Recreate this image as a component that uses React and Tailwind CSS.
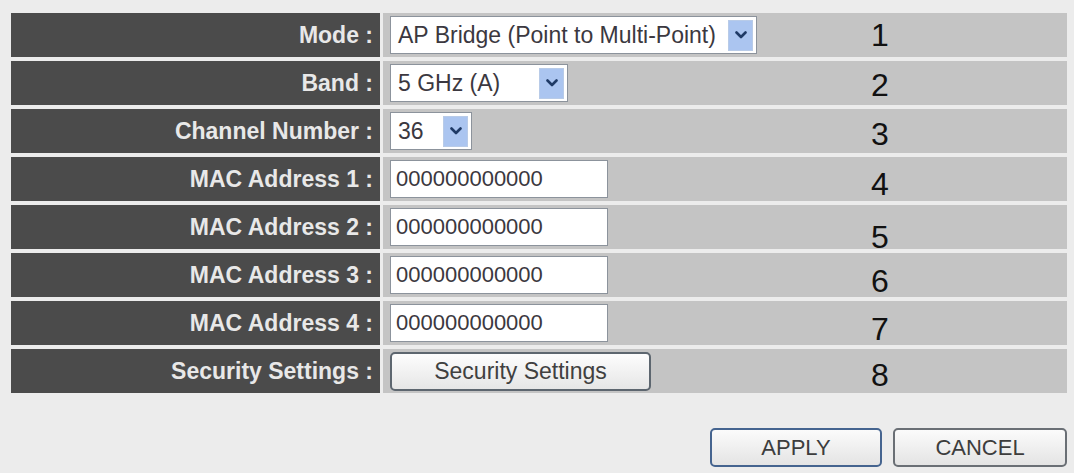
import React from "react";

const font = { fontFamily: '"Liberation Sans", Arial, sans-serif' };

// Small navy chevron used inside the dropdown arrow button
function Chevron() {
  return (
    <svg width="12" height="8" viewBox="0 0 12 8" fill="none">
      <path d="M1.5 1.5 L6 6 L10.5 1.5" stroke="#1f3a66" strokeWidth="2.6" strokeLinecap="round" strokeLinejoin="round" />
    </svg>
  );
}

function Select({ value, width }) {
  return (
    <div
      className={`flex h-[38px] items-center justify-between border border-[#8c939c] bg-white pl-[7px] pr-[3px] ${width}`}
    >
      <span className="text-[23px] leading-none text-[#3b3840]">{value}</span>
      <span className="flex h-[31px] w-[25px] items-center justify-center border border-[#b8cbe8] bg-[#abc5f0]">
        <Chevron />
      </span>
    </div>
  );
}

function TextBox({ value }) {
  return (
    <div className="flex h-[38px] w-[218px] items-center border border-[#8c939c] bg-white pl-[5px]">
      <span className="text-[22px] leading-none text-[#3b3840]">{value}</span>
    </div>
  );
}

function PushButton({ children, width, focused }) {
  return (
    <button
      className={`flex h-[39px] items-center justify-center rounded-[5px] bg-gradient-to-b from-[#fbfbfb] to-[#e4e4e4] text-[22px] leading-none text-[#3d3d3d] ${width} ${
        focused ? "border-2 border-[#45648f]" : "border-2 border-[#6a6f75]"
      }`}
      style={font}
    >
      {children}
    </button>
  );
}

const rows = [
  { label: "Mode :", control: <Select value="AP Bridge (Point to Multi-Point)" width="w-[367px]" />, num: "1", shift: "pt-0" },
  { label: "Band :", control: <Select value="5 GHz (A)" width="w-[178px]" />, num: "2", shift: "pt-[4px]" },
  { label: "Channel Number :", control: <Select value="36" width="w-[82px]" />, num: "3", shift: "pt-[5px]" },
  { label: "MAC Address 1 :", control: <TextBox value="000000000000" />, num: "4", shift: "pt-[10px]" },
  { label: "MAC Address 2 :", control: <TextBox value="000000000000" />, num: "5", shift: "pt-[20px]" },
  { label: "MAC Address 3 :", control: <TextBox value="000000000000" />, num: "6", shift: "pt-[12px]" },
  { label: "MAC Address 4 :", control: <TextBox value="000000000000" />, num: "7", shift: "pt-[11px]" },
  {
    label: "Security Settings :",
    control: (
      <button
        className="flex h-[39px] w-[261px] items-center justify-center rounded-[5px] border-2 border-[#5d666f] bg-gradient-to-b from-[#fdfdfd] to-[#e6e6e6] text-[23px] leading-none text-[#404040]"
        style={font}
      >
        Security Settings
      </button>
    ),
    num: "8",
    shift: "pt-[8px]",
  },
];

export default function App() {
  return (
    <div className="h-[473px] w-[1074px] overflow-hidden bg-[#ececec] pl-[11px] pt-[13px]" style={font}>
      <div className="flex w-[1056px] flex-col gap-[4px]">
        {rows.map((r) => (
          <div key={r.label} className="flex h-[44px] gap-[3px]">
            <div className="flex w-[369px] items-center justify-end bg-[#4b4b4b] pr-[7px]">
              <span className="text-[23px] font-bold leading-none text-[#e8e8e8]">{r.label}</span>
            </div>
            <div className="flex flex-1 items-center bg-[#c4c4c4] pl-[7px]">
              <div className="w-[440px]">{r.control}</div>
              <div className={`flex h-full w-[100px] items-center justify-center ${r.shift}`}>
                <span className="text-[32px] leading-none text-[#111]">{r.num}</span>
              </div>
            </div>
          </div>
        ))}
      </div>

      <div className="mt-[35px] flex w-[1056px] justify-end gap-[11px]">
        <PushButton width="w-[172px]" focused>
          APPLY
        </PushButton>
        <PushButton width="w-[174px]">CANCEL</PushButton>
      </div>
    </div>
  );
}
